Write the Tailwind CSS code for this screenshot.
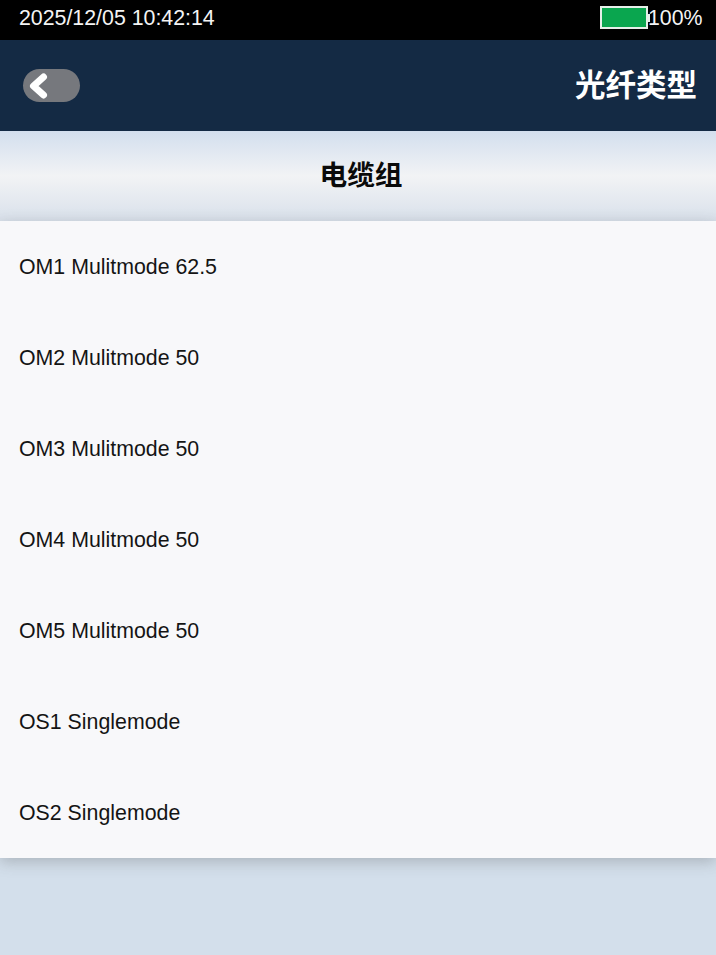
<!DOCTYPE html>
<html lang="zh-CN">
  <head>
    <meta charset="UTF-8" />
    <title>光纤类型</title>
    <script src="https://cdn.jsdelivr.net/npm/@tailwindcss/browser@4"></script>
  </head>
  <body class="w-[716px] h-[955px] overflow-hidden flex flex-col bg-[#d3dfeb] font-['Liberation_Sans','Noto_Sans_CJK_SC',sans-serif]">
    <!-- Status bar -->
    <div class="h-[40px] shrink-0 bg-black flex items-center pl-[19px] pr-[13.5px] text-[#f4f4f4] text-[21.33px]">
      <span class="flex-1 -mt-[2px]">2025/12/05 10:42:14</span>
      <div class="flex items-center -mt-[4px]">
        <div class="w-[48px] h-[23px] border-2 border-[#e6efe9] bg-[#0aa64f]"></div>
        <div class="w-[2px] h-[8px] bg-[#e6efe9]"></div>
        <span class="-ml-[2px] mt-[2px]">100%</span>
      </div>
    </div>

    <!-- Title bar -->
    <div class="h-[91px] shrink-0 bg-[#142a44] flex items-center justify-between pl-[23px] pr-[19px]">
      <div class="w-[57px] h-[33px] rounded-full bg-[#76787d] flex items-center pl-[5px]">
        <svg width="22" height="26" viewBox="0 0 22 26" fill="none">
          <path d="M15.5 4 L5.5 13 L15.5 22" stroke="#ffffff" stroke-width="7" stroke-linecap="round" stroke-linejoin="round" />
        </svg>
      </div>
      <span class="text-white text-[30.5px] font-bold">光纤类型</span>
    </div>

    <!-- Group header -->
    <div class="h-[90px] shrink-0 flex items-center justify-center pl-[6px] bg-linear-to-b from-[#d3dfee] via-[#f2f3f5] to-[#d9e1eb] text-[27.7px] font-bold text-[#0a0a0a]">
      电缆组
    </div>

    <!-- Fibre list -->
    <div class="bg-[#f8f8fa] shadow-[0_4px_14px_rgba(70,70,70,0.28)] text-[21.33px] text-[#141414]">
      <div class="h-[91px] flex items-center pl-[19px] pt-[3px]">OM1 Mulitmode 62.5</div>
      <div class="h-[91px] flex items-center pl-[19px] pt-[3px]">OM2 Mulitmode 50</div>
      <div class="h-[91px] flex items-center pl-[19px] pt-[3px]">OM3 Mulitmode 50</div>
      <div class="h-[91px] flex items-center pl-[19px] pt-[3px]">OM4 Mulitmode 50</div>
      <div class="h-[91px] flex items-center pl-[19px] pt-[3px]">OM5 Mulitmode 50</div>
      <div class="h-[91px] flex items-center pl-[19px] pt-[3px]">OS1 Singlemode</div>
      <div class="h-[91px] flex items-center pl-[19px] pt-[3px]">OS2 Singlemode</div>
    </div>
  </body>
</html>
